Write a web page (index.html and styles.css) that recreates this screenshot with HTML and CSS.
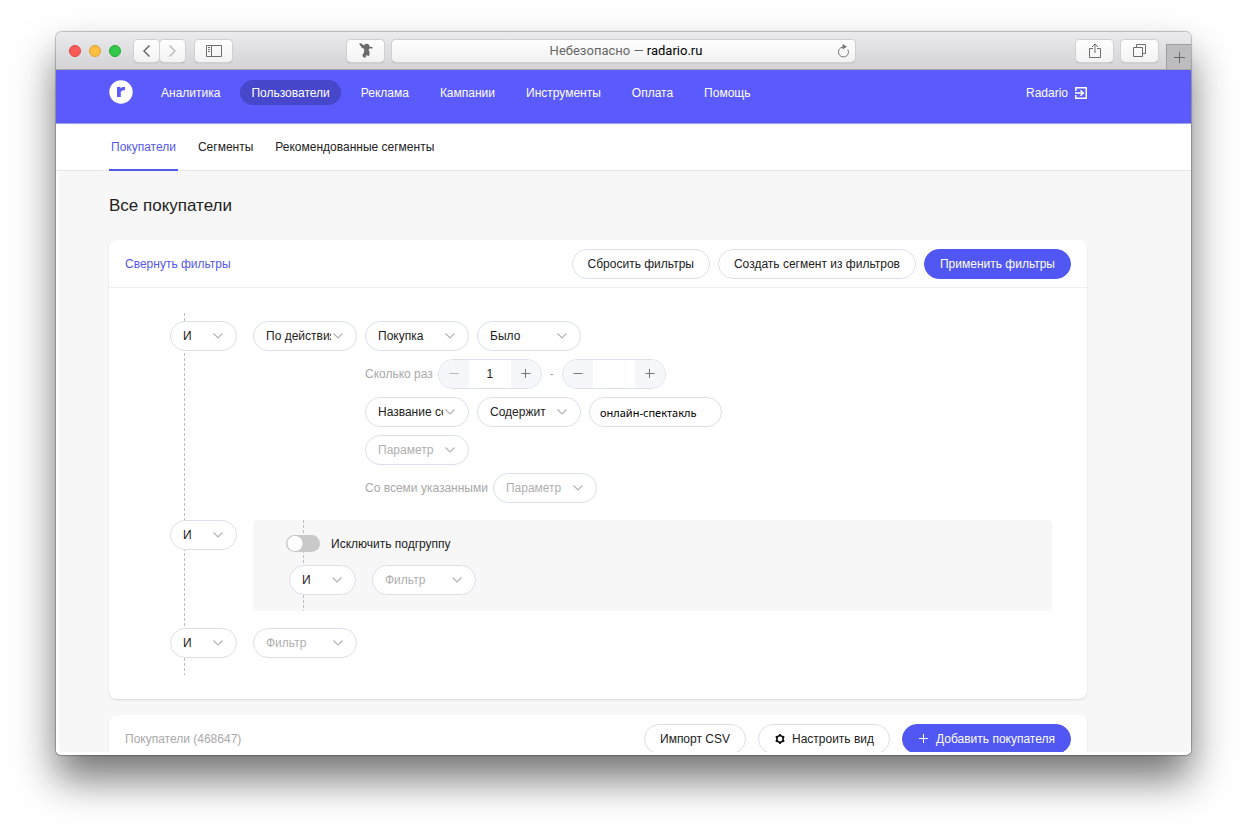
FILE: index.html
```html
<!DOCTYPE html>
<html lang="ru">
<head>
<meta charset="utf-8">
<title>Все покупатели — Radario</title>
<link rel="stylesheet" href="styles.css">
</head>
<body>
<svg class="defs" width="0" height="0" aria-hidden="true">
  <symbol id="chevron" viewBox="0 0 10 6"><path d="M0.500 0.500 5 5 9.500 0.500" fill="none" stroke="currentColor" stroke-width="1.200"/></symbol>
</svg>
<div class="window">
  <header class="toolbar">
    <div class="lights"><span class="light light-close"></span><span class="light light-min"></span><span class="light light-max"></span></div>
    <div class="history">
      <button class="tool tool-small" aria-label="Назад"><svg width="9" height="14" viewBox="0 0 9 14" fill="none" stroke="#6a6a6a" stroke-width="1.500"><path d="M7.500 1.500 2 7l5.500 5.500"/></svg></button>
      <button class="tool tool-small" aria-label="Вперёд"><svg width="9" height="14" viewBox="0 0 9 14" fill="none" stroke="#bdbdbd" stroke-width="1.500"><path d="M1.500 1.500 7 7l-5.500 5.500"/></svg></button>
    </div>
    <button class="tool" aria-label="Боковая панель"><svg width="16" height="12" viewBox="0 0 16 12" fill="none" stroke="#6e6e6e"><path d="M.5.5h15v11H.5zM5.500.5v11M2 2.500h2M2 4.500h2M2 6.500h2"/></svg></button>
    <button class="tool tool-bird" aria-label="Расширение"><svg width="14" height="16" viewBox="0 0 14 16" fill="#6b6b6b"><path d="M0 .5 2 .3 5 2.500 6 1l3-.2 1.500 2v1L13.500 4v1.500L10 5.500l-.3 1.500 1 2.500-.5 3L9 13.500 8.200 12 7 12.800 6.500 15 4 14l-.6-2L5 9.500 5.200 6 2.500 4.500 1 2z"/></svg></button>
    <div class="address"><p class="url"><span class="insecure">Небезопасно —</span> radario.ru</p>
      <button class="reload" aria-label="Обновить"><svg width="13" height="14" viewBox="0 0 13 14"><path d="M6 3a5 5 0 1 0 4.800 2.500" fill="none" stroke="#777"/><path d="M5.500 0v5.500L10 2.700z" fill="#777"/></svg></button></div>
    <div class="actions">
      <button class="tool" aria-label="Поделиться"><svg width="12" height="16" viewBox="0 0 12 16" fill="none" stroke="#6e6e6e"><path d="M4 5.500H.5v9h11v-9H8M6 10V1M3 4l3-3 3 3"/></svg></button>
      <button class="tool" aria-label="Вкладки"><svg width="13" height="13" viewBox="0 0 13 13" fill="none" stroke="#6e6e6e"><path d="M.5 3.500h9v9h-9zM3.500 3.500v-3h9v9h-3"/></svg></button>
      <button class="new-tab" aria-label="Новая вкладка"><svg width="11" height="11" viewBox="0 0 11 11" stroke="#6a6a6a"><path d="M5.500 0v11M0 5.500h11"/></svg></button>
    </div>
  </header>
  <div class="page">
    <nav class="nav">
      <a class="logo" href="#" aria-label="Radario"><svg width="24" height="24" viewBox="0 0 24 24"><circle cx="12" cy="12" r="11.700" fill="#fff"/><path d="M8 7h3.500v1.600C12.200 7.400 13.500 6.800 16 7v3.200c-2.800-.3-4.200.4-4.200 2.600V17H8z" fill="#5b5bfd"/></svg></a>
      <ul class="menu">
        <li><a href="#">Аналитика</a></li>
        <li><a class="current" href="#">Пользователи</a></li>
        <li><a href="#">Реклама</a></li>
        <li><a href="#">Кампании</a></li>
        <li><a href="#">Инструменты</a></li>
        <li><a href="#">Оплата</a></li>
        <li><a href="#">Помощь</a></li>
      </ul>
      <a class="account" href="#">Radario <svg width="12" height="12" viewBox="0 0 12 12" fill="none" stroke="#fff" stroke-width="1.500"><path d="M.8 4V.8h10.400v10.400H.8V8M0 6h8M5.500 3.200 8.300 6 5.500 8.800"/></svg></a>
    </nav>
    <nav class="tabs">
      <a class="active" href="#">Покупатели</a>
      <a href="#">Сегменты</a>
      <a href="#">Рекомендованные сегменты</a>
    </nav>
    <main class="content">
      <h1>Все покупатели</h1>
      <section class="card">
        <header class="card-head">
          <a class="collapse" href="#">Свернуть фильтры</a>
          <div class="buttons">
            <button class="btn">Сбросить фильтры</button>
            <button class="btn">Создать сегмент из фильтров</button>
            <button class="btn primary">Применить фильтры</button>
          </div>
        </header>
        <div class="card-body">
          <div class="tree">
            <div class="branch">
              <span class="select short"><select aria-label="Оператор"><option>И</option></select><svg><use href="#chevron"/></svg></span>
              <span class="select"><select aria-label="Фильтр"><option>По действиям</option></select><svg><use href="#chevron"/></svg></span>
              <div class="rules">
                <div class="rule">
                  <span class="select"><select aria-label="Действие"><option>Покупка</option></select><svg><use href="#chevron"/></svg></span>
                  <span class="select"><select aria-label="Условие"><option>Было</option></select><svg><use href="#chevron"/></svg></span>
                </div>
                <div class="rule">
                  <label for="from">Сколько раз</label>
                  <span class="stepper"><button class="off" aria-label="Меньше"><svg viewBox="0 0 10 10"><path d="M.5 4.500h9"/></svg></button><input id="from" type="text" value="1"><button aria-label="Больше"><svg viewBox="0 0 10 10"><path d="M.5 4.500h9M4.500 0v9"/></svg></button></span>
                  <span class="dash">-</span>
                  <span class="stepper"><button aria-label="Меньше"><svg viewBox="0 0 10 10"><path d="M.5 4.500h9"/></svg></button><input type="text" value="" aria-label="До"><button aria-label="Больше"><svg viewBox="0 0 10 10"><path d="M.5 4.500h9M4.500 0v9"/></svg></button></span>
                </div>
                <div class="rule">
                  <span class="select"><select aria-label="Поле"><option>Название события</option></select><svg><use href="#chevron"/></svg></span>
                  <span class="select"><select aria-label="Сравнение"><option>Содержит</option></select><svg><use href="#chevron"/></svg></span>
                  <input class="field" type="text" value="онлайн-спектакль" aria-label="Значение">
                </div>
                <div class="rule">
                  <span class="select empty"><select aria-label="Параметр"><option>Параметр</option></select><svg><use href="#chevron"/></svg></span>
                </div>
                <div class="rule">
                  <label for="all">Со всеми указанными</label>
                  <span class="select empty"><select id="all"><option>Параметр</option></select><svg><use href="#chevron"/></svg></span>
                </div>
              </div>
            </div>
            <div class="branch">
              <span class="select short"><select aria-label="Оператор"><option>И</option></select><svg><use href="#chevron"/></svg></span>
              <div class="subgroup">
                <label class="exclude"><input class="toggle" type="checkbox">Исключить подгруппу</label>
                <div class="branch">
                  <span class="select short"><select aria-label="Оператор"><option>И</option></select><svg><use href="#chevron"/></svg></span>
                  <span class="select empty"><select aria-label="Фильтр"><option>Фильтр</option></select><svg><use href="#chevron"/></svg></span>
                </div>
              </div>
            </div>
            <div class="branch">
              <span class="select short"><select aria-label="Оператор"><option>И</option></select><svg><use href="#chevron"/></svg></span>
              <span class="select empty"><select aria-label="Фильтр"><option>Фильтр</option></select><svg><use href="#chevron"/></svg></span>
            </div>
          </div>
        </div>
      </section>
      <section class="card">
        <header class="card-head">
          <h2>Покупатели (468647)</h2>
          <div class="buttons wide">
            <button class="btn">Импорт CSV</button>
            <button class="btn"><svg width="12" height="12" viewBox="0 0 12 12" fill="none" stroke="#111"><circle cx="6" cy="6" r="3.200" stroke-width="1.600"/><path d="M6 1v2M6 9v2M1.700 3.500l1.700 1M8.600 7.500l1.700 1M1.700 8.500l1.700-1M8.600 4.500l1.700-1" stroke-width="1.800"/></svg>Настроить вид</button>
            <button class="btn primary"><svg width="12" height="12" viewBox="0 0 12 12" stroke="#fff"><path d="M5.500 1v9M1 5.500h9"/></svg>Добавить покупателя</button>
          </div>
        </header>
      </section>
    </main>
  </div>
</div>
</body>
</html>
```

FILE: styles.css
```css
* { box-sizing: border-box; }
body {
  margin: 0;
  height: 100vh;
  padding: 32px 56px 80px;
  background: #fff;
  color: #222;
  font: 12px/16px "Liberation Sans", Arial, sans-serif;
  overflow: hidden;
}
a { color: inherit; text-decoration: none; }
button, input, select { margin: 0; font: inherit; color: inherit; }
button { cursor: pointer; }
h1, h2, p, ul { margin: 0; padding: 0; font-weight: 400; }
.defs { display: block; position: absolute; }

.window {
  display: flex;
  flex-direction: column;
  height: 100%;
  padding-bottom: 3px;
  border-radius: 6px 6px 5px 5px;
  background: #fff;
  overflow: hidden;
  box-shadow: 0 0 1px 1px rgba(0, 0, 0, .25), 0 24px 40px 0 rgba(0, 0, 0, .55);
}
.toolbar {
  display: flex;
  flex: none;
  align-items: center;
  height: 38px;
  padding-left: 13px;
  border-bottom: 1px solid #a9a7ab;
  background: linear-gradient(#ebeaec, #d3d2d4);
}
.lights { display: flex; gap: 8px; }
.light { width: 12px; height: 12px; border-radius: 50%; border: 1px solid; }
.light-close { background: #fc5b57; border-color: #e2443f; }
.light-min { background: #fdbe41; border-color: #e0a02c; }
.light-max { background: #34c84a; border-color: #1fad32; }
.history { display: flex; gap: 1px; margin: 0 10px 0 13px; }
.tool {
  display: grid;
  flex: none;
  place-items: center;
  width: 37px;
  height: 22px;
  padding: 0;
  border: 0;
  border-radius: 4px;
  background: linear-gradient(#fff, #f2f2f2);
  box-shadow: 0 0 0 1px #d0cfd1, 0 1px 1px #8f8f8f;
}
.tool-small { width: 25px; }
.tool-bird { margin-left: 115px; }
.address {
  display: flex;
  align-items: center;
  flex: 0 1 463px;
  height: 22px;
  margin-left: 8px;
  padding: 0 5px 0 23px;
  border-radius: 4px;
  background: linear-gradient(#fff, #f1f1f1);
  box-shadow: 0 0 0 1px #d0cfd1, 0 1px 1px #8f8f8f;
}
.url { flex: 1; text-align: center; font: 13px/24px Roboto, sans-serif; color: #000; }
.insecure { color: #666; }
.reload { display: grid; padding: 0; border: 0; background: none; }
.actions { display: flex; align-items: center; align-self: stretch; gap: 8px; margin-left: auto; }
.new-tab {
  display: grid;
  place-items: center;
  align-self: flex-end;
  width: 25px;
  height: 25px;
  padding: 0;
  border: solid #9d9d9d;
  border-width: 1px 0 0 1px;
  background: #bdbcbe;
}

.page { flex: 1; min-height: 0; overflow: hidden; background: #fff; }
.nav {
  display: flex;
  align-items: flex-start;
  height: 54px;
  padding: 10px 104px 0 53px;
  border-bottom: 1px solid #9f9ff8;
  background: #5b5bfd;
  color: #fff;
}
.logo { display: block; height: 24px; }
.menu { display: flex; gap: 9px; margin-left: 17px; list-style: none; }
.menu a { display: block; height: 25px; padding: 0 11px; border-radius: 13px; line-height: 26px; }
.menu .current { background: #4747cb; }
.account { display: flex; align-items: center; gap: 7px; margin-left: auto; height: 25px; }
.tabs {
  display: flex;
  gap: 18px;
  height: 47px;
  padding-left: 53px;
  border-bottom: 1px solid #e6e6e6;
  background: #fff;
  line-height: 46px;
}
.tabs a { height: 47px; padding: 0 2px; }
.tabs .active { color: #5457f0; border-bottom: 2px solid #5457f0; }

.content {
  min-height: 100%;
  padding: 25px 104px 0 50px;
  border-left: 3px solid #fff;
  background: #f7f7f7;
}
h1 { font-size: 17px; line-height: 20px; margin-bottom: 24px; }
.card {
  margin-bottom: 16px;
  border-radius: 8px;
  background: #fff;
  box-shadow: 0 1px 2px rgba(0, 0, 0, .12);
}
.card-head {
  display: flex;
  align-items: center;
  justify-content: space-between;
  height: 48px;
  padding: 0 16px;
  border-bottom: 1px solid #efeff1;
}
.collapse { color: #5457f0; }
h2 { font-size: 12px; color: #a9a9a9; }
.buttons { display: flex; gap: 8px; }
.buttons.wide { gap: 12px; }
.btn {
  display: flex;
  align-items: center;
  gap: 6px;
  height: 30px;
  padding: 0 15px;
  border: 1px solid #dcdfe9;
  border-radius: 15px;
  background: #fff;
}
.btn.primary { border-color: #5157f2; background: #5157f2; color: #fff; }

.card-body { padding: 25px 35px 24px 61px; }
.tree {
  display: grid;
  gap: 17px;
  padding: 8px 0 17px;
  background: repeating-linear-gradient(#bfbfbf 0 3px, transparent 3px 5px) 14px 0 / 1px 100% no-repeat;
}
.branch { display: flex; align-items: flex-start; gap: 16px; }
.rules { display: grid; gap: 8px; margin-left: -8px; }
.rule { display: flex; align-items: center; gap: 8px; color: #a9a9a9; }
.rule label { margin-right: -3px; }
.select { display: grid; flex: none; width: 104px; height: 30px; align-items: center; color: #222; }
.short { width: 67px; }
.select select {
  grid-area: 1 / 1;
  appearance: none;
  width: 100%;
  height: 30px;
  padding: 0 25px 0 12px;
  border: 1px solid #dcdfe9;
  border-radius: 15px;
  background: #fff;
}
.select svg {
  grid-area: 1 / 1;
  justify-self: end;
  width: 10px;
  height: 6px;
  margin-right: 14px;
  color: #b4b4b4;
  pointer-events: none;
}
.select.empty { color: #b0b0b0; }
.stepper {
  display: flex;
  width: 104px;
  height: 30px;
  border: 1px solid #dcdfe9;
  border-radius: 15px;
  overflow: hidden;
  color: #222;
}
.stepper button { flex: none; display: grid; place-items: center; width: 30px; padding: 0; border: 0; background: #f5f7fa; }
.stepper svg { width: 10px; height: 10px; stroke: #777; }
.stepper .off svg { stroke: #b8b8b8; }
.stepper input { flex: 1; min-width: 0; padding: 0; border: 0; text-align: center; background: #fff; }
.field {
  width: 133px;
  height: 30px;
  padding: 0 10px;
  border: 1px solid #dcdfe9;
  border-radius: 15px;
  color: #000;
  font: 11px/16px "Noto Sans", sans-serif;
}
.subgroup {
  display: grid;
  gap: 13px;
  flex: 1;
  padding: 15px 16px 16px 36px;
  border-radius: 4px;
  background: repeating-linear-gradient(#bfbfbf 0 3px, transparent 3px 5px) 50px 0 / 1px 100% no-repeat #f7f7f7;
}
.exclude { display: flex; align-items: center; gap: 11px; height: 17px; margin-left: -3px; }
.toggle {
  appearance: none;
  width: 34px;
  height: 17px;
  margin: 0;
  border-radius: 9px;
  background: radial-gradient(circle at 9px 50%, #fff 7px, transparent 8px) #c9c9c9;
}
```
